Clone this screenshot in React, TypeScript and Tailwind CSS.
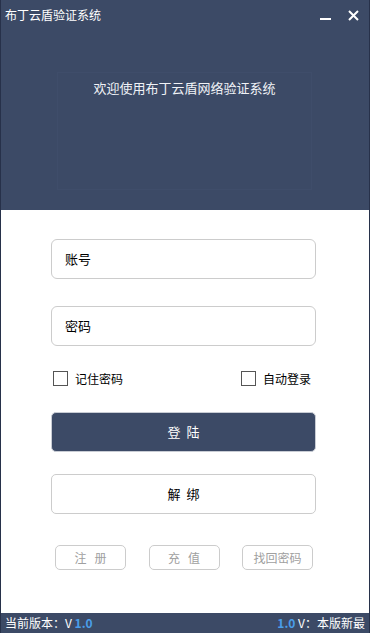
import React from "react";

const font = { fontFamily: '"Noto Sans CJK SC", "Noto Sans", sans-serif' };

const App = () => {
  return (
    <div
      className="w-[370px] h-[633px] flex flex-col bg-white border-l border-r border-[#27314a] overflow-hidden"
      style={font}
    >
      {/* header */}
      <div className="h-[210px] bg-[#3c4a66] flex flex-col">
        <div className="h-[30px] flex items-center pl-[4px] pr-[10px]">
          <span className="text-white text-[12px] leading-none">布丁云盾验证系统</span>
          <div className="ml-auto flex items-center gap-[17px]">
            <svg width="11" height="11" viewBox="0 0 11 11">
              <rect x="0" y="8" width="11" height="2" fill="#fff" />
            </svg>
            <svg width="11" height="11" viewBox="0 0 11 11">
              <path d="M1 1 L10 10 M10 1 L1 10" stroke="#fff" strokeWidth="2" />
            </svg>
          </div>
        </div>
        <div className="ml-[56px] mt-[42px] w-[255px] h-[118px] border border-[#3f4d6a] flex justify-center">
          <span className="text-[#f0f2f6] text-[13px] mt-[8px] leading-none">欢迎使用布丁云盾网络验证系统</span>
        </div>
      </div>

      {/* form */}
      <div className="flex-1 flex flex-col pl-[50px] pr-[53px]">
        <div className="mt-[29px] h-[40px] border border-[#cccccc] rounded-[6px] flex items-center px-[13px] text-[13px] text-black">
          账号
        </div>
        <div className="mt-[27px] h-[40px] border border-[#cccccc] rounded-[6px] flex items-center px-[13px] text-[13px] text-black">
          密码
        </div>
        <div className="mt-[25px] flex items-center text-[12px] text-black leading-none">
          <label className="flex items-center gap-[7px] ml-[2px]">
            <span className="w-[15px] h-[15px] border border-[#555] bg-white" />
            记住密码
          </label>
          <label className="flex items-center gap-[7px] ml-auto mr-[5px]">
            <span className="w-[15px] h-[15px] border border-[#555] bg-white" />
            自动登录
          </label>
        </div>
        <button className="mt-[26px] h-[40px] bg-[#3c4a66] rounded-[5px] border border-[#c8ccd4] text-white text-[13px] tracking-[6px] pl-[6px]">
          登陆
        </button>
        <button className="mt-[22px] h-[40px] bg-white rounded-[5px] border border-[#cccccc] text-black text-[13px] tracking-[6px] pl-[6px]">
          解绑
        </button>
        <div className="mt-[31px] flex justify-between pl-[4px] pr-[3px]">
          <button className="w-[71px] h-[25px] border border-[#cccccc] rounded-[5px] text-[#a0a0a0] text-[12px] tracking-[8px] pl-[8px]">
            注册
          </button>
          <button className="w-[71px] h-[25px] border border-[#cccccc] rounded-[5px] text-[#a0a0a0] text-[12px] tracking-[8px] pl-[8px]">
            充值
          </button>
          <button className="w-[71px] h-[25px] border border-[#cccccc] rounded-[5px] text-[#a0a0a0] text-[12px]">
            找回密码
          </button>
        </div>
      </div>

      {/* footer */}
      <div className="h-[20px] bg-[#3c4a66] flex items-center px-[4px] text-[12px] text-white leading-none">
        <span>
          当前版本：V <span className="text-[#4a9eea] font-bold">1.0</span>
        </span>
        <span className="ml-auto">
          <span className="text-[#4a9eea] font-bold">1.0</span> V：本版新最
        </span>
      </div>
    </div>
  );
};

export default App;
